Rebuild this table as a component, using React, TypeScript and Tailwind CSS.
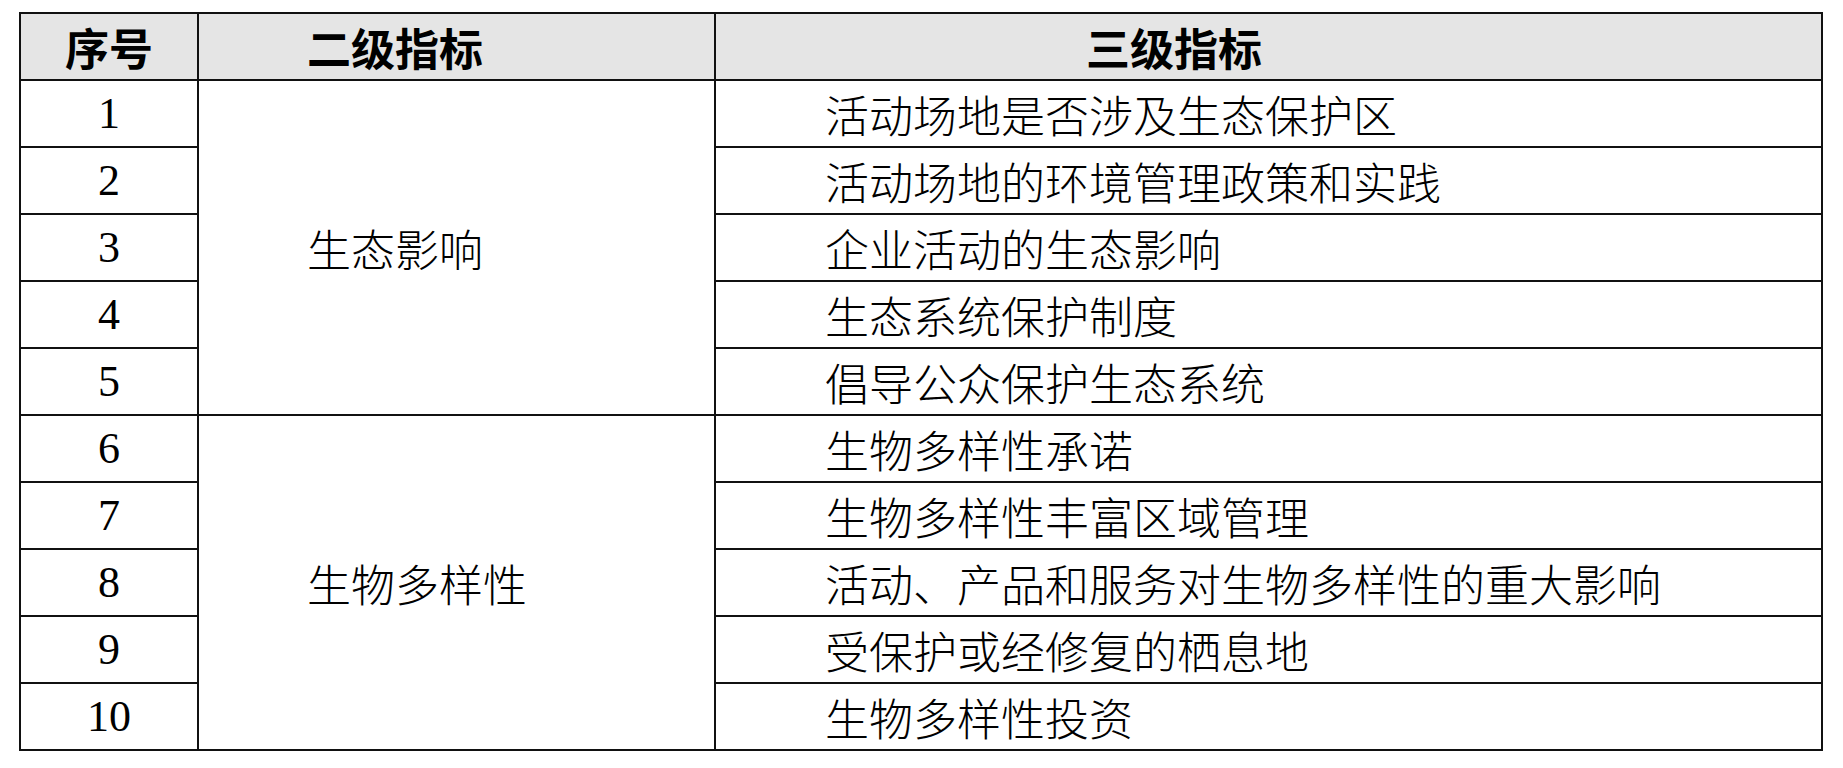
import React from 'react';

const secondLevel = [
  {
    name: '生态影响',
    items: [
      '活动场地是否涉及生态保护区',
      '活动场地的环境管理政策和实践',
      '企业活动的生态影响',
      '生态系统保护制度',
      '倡导公众保护生态系统',
    ],
  },
  {
    name: '生物多样性',
    items: [
      '生物多样性承诺',
      '生物多样性丰富区域管理',
      '活动、产品和服务对生物多样性的重大影响',
      '受保护或经修复的栖息地',
      '生物多样性投资',
    ],
  },
];

const cjk = "font-['Noto_Sans_CJK_SC',sans-serif]";

export default function App() {
  let index = 0;

  return (
    <div className="min-h-screen bg-white pl-[19px] pt-[12px] text-black">
      <table className="table-fixed border-collapse w-[1803px] text-[44px] leading-none">
        <colgroup>
          <col className="w-[178px]" />
          <col className="w-[517px]" />
          <col className="w-[1107px]" />
        </colgroup>
        <thead>
          <tr className="h-[67px] bg-[#e5e5e5]">
            <th className={`border-2 border-[#111] text-center font-bold ${cjk}`}>序号</th>
            <th className={`border-2 border-[#111] pl-[108px] text-left font-bold ${cjk}`}>二级指标</th>
            <th className={`border-2 border-[#111] pl-[370px] text-left font-bold ${cjk}`}>三级指标</th>
          </tr>
        </thead>
        <tbody>
          {secondLevel.map((group) =>
            group.items.map((item, i) => {
              index += 1;
              return (
                <tr key={item} className="h-[67px]">
                  <td className="border-2 border-[#111] text-center font-['Liberation_Serif',serif]">
                    {index}
                  </td>
                  {i === 0 && (
                    <td
                      rowSpan={group.items.length}
                      className={`border-2 border-[#111] pl-[108px] align-middle font-light ${cjk}`}
                    >
                      {group.name}
                    </td>
                  )}
                  <td className={`border-2 border-[#111] pl-[109px] whitespace-nowrap font-light ${cjk}`}>
                    {item}
                  </td>
                </tr>
              );
            })
          )}
        </tbody>
      </table>
    </div>
  );
}
